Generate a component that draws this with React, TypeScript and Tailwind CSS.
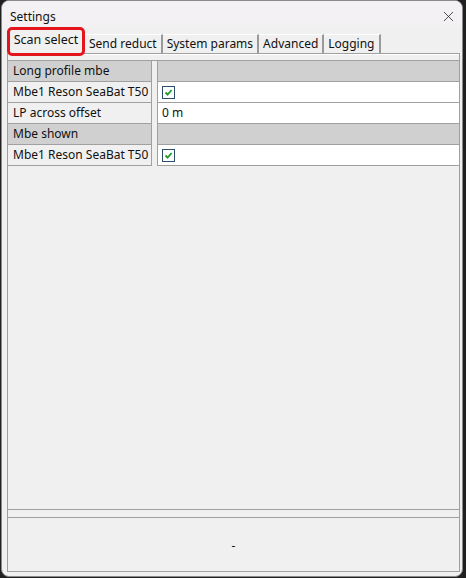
import { X } from "lucide-react";

type Row = {
  label: string;
  kind: "header" | "check" | "text";
  value?: string;
};

const rows: Row[] = [
  { label: "Long profile mbe", kind: "header" },
  { label: "Mbe1 Reson SeaBat T50", kind: "check" },
  { label: "LP across offset", kind: "text", value: "0 m" },
  { label: "Mbe shown", kind: "header" },
  { label: "Mbe1 Reson SeaBat T50", kind: "check" },
];

const tabs = ["Send reduct", "System params", "Advanced", "Logging"];

function CheckBox() {
  return (
    <div className="w-[13px] h-[13px] border border-[#2c4d6c] bg-white flex items-center justify-center">
      <svg width="9" height="9" viewBox="0 0 9 9">
        <path d="M1.5 4.5 L3.6 6.6 L7.6 2" fill="none" stroke="#1f9d2a" strokeWidth="1.8" />
      </svg>
    </div>
  );
}

export default function App() {
  return (
    <div
      className="w-[466px] h-[578px] bg-[#202020] pl-px pr-[3px] pb-px text-[12px] text-[#111]"
      style={{ fontFamily: '"Noto Sans", "Liberation Sans", sans-serif' }}
    >
      <div className="h-full flex flex-col bg-[#f0f0f0] border border-[#8a8a8a] rounded-[8px] overflow-hidden">
        {/* TITLE */}
        <div className="h-[26px] shrink-0 bg-[#f3f1f3] flex items-center justify-between pl-[8px] pr-[5px]">
          <span className="leading-none pt-[5px]">Settings</span>
          <X className="w-[17px] h-[17px] text-[#222] mt-[4px]" strokeWidth={1.1} />
        </div>

        {/* BODY */}
        <div className="flex-1 flex flex-col pl-[5px] pr-[2px] pb-[4px]">
          {/* TABS */}
          <div className="h-[26px] shrink-0 flex items-end">
            <div className="h-[29px] w-[78px] -mb-[3px] relative z-10 border-[3px] border-[#e3141b] rounded-[5px] bg-[#f0f0f0] flex items-center justify-center">
              <span className="leading-none text-[12.5px] pb-[3px]">Scan select</span>
            </div>
            {tabs.map((t) => (
              <div
                key={t}
                className="h-[19px] flex items-center px-[4px] border-t border-white border-r-2 border-r-[#9a9a9a] bg-[#f0f0f0]"
              >
                <span className="leading-none">{t}</span>
              </div>
            ))}
          </div>

          {/* PANE */}
          <div className="flex-1 flex flex-col border border-[#a0a0a0]">
            <div className="flex-1 flex flex-col pt-[5px] border-t border-white">
              <div className="border-t border-[#a0a0a0] flex">
                {/* left column */}
                <div className="w-[143px] flex flex-col">
                  {rows.map((r, i) => (
                    <div
                      key={i}
                      className={`h-[21px] border-b border-[#a0a0a0] pl-[5px] flex items-center ${
                        r.kind === "header" ? "bg-[#d0d0d0]" : "bg-[#f0f0f0]"
                      }`}
                    >
                      <span className="leading-none whitespace-nowrap">{r.label}</span>
                    </div>
                  ))}
                </div>
                {/* splitter */}
                <div className="w-[7px] border-l border-r border-[#a0a0a0] bg-[#f0f0f0]" />
                {/* right column */}
                <div className="flex-1 flex flex-col">
                  {rows.map((r, i) => (
                    <div
                      key={i}
                      className={`h-[21px] border-b border-[#a0a0a0] pl-[4px] flex items-center ${
                        r.kind === "header" ? "bg-[#d0d0d0]" : "bg-white"
                      }`}
                    >
                      {r.kind === "check" && <CheckBox />}
                      {r.kind === "text" && <span className="leading-none">{r.value}</span>}
                    </div>
                  ))}
                </div>
              </div>
            </div>
          </div>

          {/* SPLITTER */}
          <div className="h-[7px] shrink-0 border-l border-r border-[#a0a0a0]" />

          {/* STATUS */}
          <div className="h-[55px] shrink-0 border border-[#a0a0a0] flex items-center justify-center">
            <span className="leading-none pt-[3px]">-</span>
          </div>
        </div>
      </div>
    </div>
  );
}
